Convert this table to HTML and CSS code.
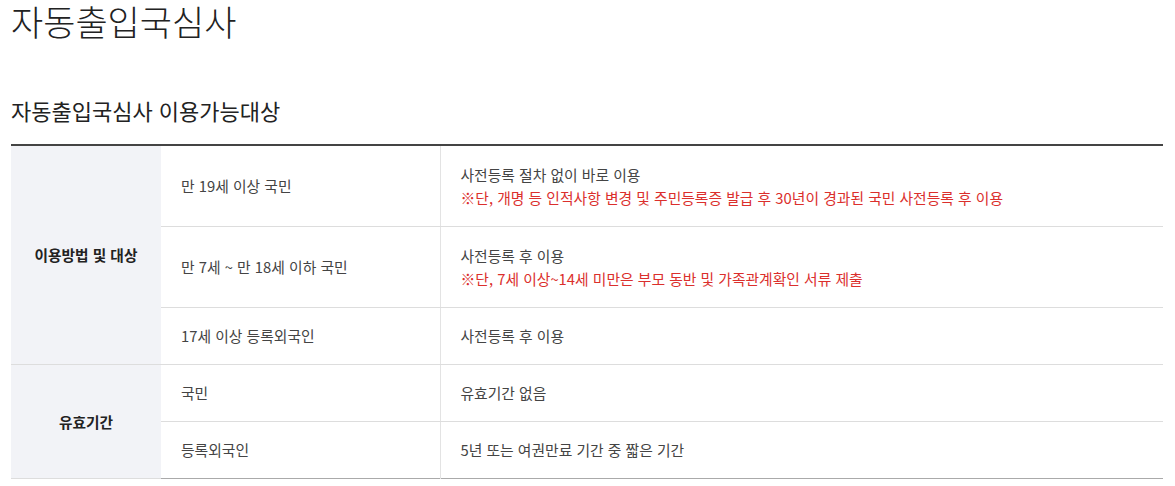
FILE: index.html
```html
<!DOCTYPE html>
<html lang="ko">
<head>
<meta charset="utf-8">
<title>자동출입국심사</title>
<link rel="stylesheet" href="styles.css">
</head>
<body>
<div class="page">
  <h1 class="title">자동출입국심사</h1>
  <h2 class="subtitle">자동출입국심사 이용가능대상</h2>
  <table class="info">
    <colgroup>
      <col class="c1"><col class="c2"><col class="c3">
    </colgroup>
    <tbody>
      <tr class="tall">
        <th rowspan="3">이용방법 및 대상</th>
        <td class="mid">만 19세 이상 국민</td>
        <td>사전등록 절차 없이 바로 이용<br><span class="red">※단, 개명 등 인적사항 변경 및 주민등록증 발급 후 30년이 경과된 국민 사전등록 후 이용</span></td>
      </tr>
      <tr class="tall">
        <td class="mid">만 7세 ~ 만 18세 이하 국민</td>
        <td>사전등록 후 이용<br><span class="red">※단, 7세 이상~14세 미만은 부모 동반 및 가족관계확인 서류 제출</span></td>
      </tr>
      <tr class="short">
        <td class="mid">17세 이상 등록외국인</td>
        <td>사전등록 후 이용</td>
      </tr>
      <tr class="short">
        <th rowspan="2">유효기간</th>
        <td class="mid">국민</td>
        <td>유효기간 없음</td>
      </tr>
      <tr class="short">
        <td class="mid">등록외국인</td>
        <td>5년 또는 여권만료 기간 중 짧은 기간</td>
      </tr>
    </tbody>
  </table>
</div>
</body>
</html>
```
FILE: styles.css
```css
html, body {
  margin: 0;
  padding: 0;
  background: #fff;
}
body {
  font-family: "Noto Sans CJK KR", "Noto Sans", sans-serif;
  color: #333;
}
.page {
  padding: 0 12px 0 11px;
}
.title {
  margin: 0;
  font-size: 35px;
  line-height: 42px;
  font-weight: 300;
  color: #222;
}
.subtitle {
  margin: 53px 0 0;
  font-size: 22px;
  line-height: 30px;
  font-weight: 400;
  color: #222;
}
.info {
  margin-top: 19px;
  width: 100%;
  border-collapse: collapse;
  border-top: 2px solid #444;
  border-bottom: 1px solid #aaa;
  table-layout: fixed;
}
.c1 { width: 150px; }
.c2 { width: 279px; }
.info th {
  background: #f2f3f7;
  font-size: 14.7px;
  font-weight: 700;
  color: #222;
  text-align: center;
  border-bottom: 1px solid #ddd;
}
.info td {
  padding: 0 20px;
  font-size: 14.8px;
  line-height: 23px;
  color: #444;
  border-bottom: 1px solid #ddd;
  vertical-align: middle;
}
.info td.mid {
  border-right: 1px solid #e3e3e3;
}
.info tr:last-child td, .info tr:last-child th { border-bottom: 0; }
.tall { height: 81px; }
.short { height: 57px; }
.red { color: #db2f2c; }
```
